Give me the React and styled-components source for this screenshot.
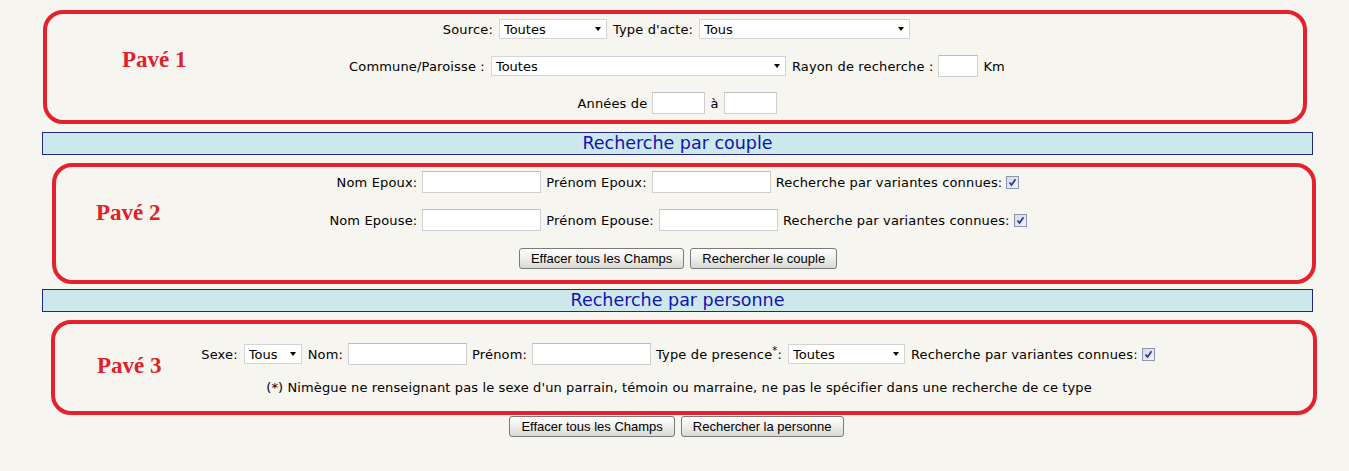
import styled, { createGlobalStyle } from 'styled-components';

const GlobalStyle = createGlobalStyle`
    html, body {
        margin: 0;
        padding: 0;
        background: #f6f5ef;
    }
    body {
        font-family: 'DejaVu Sans', Verdana, sans-serif;
        font-size: 13px;
        color: #000;
    }
`;

function SelectField({ width, value }) {
    return (
        <SelectWrap $width={width}>
            <Select defaultValue={value}>
                <option>{value}</option>
            </Select>
        </SelectWrap>
    );
}

function CheckMark() {
    return (
        <CheckBox>
            <svg width='9' height='9' viewBox='0 0 9 9'>
                <path d='M1.5 4.5 L3.5 7 L7.5 1.2' fill='none' stroke='#2a3f8f' strokeWidth='1.8' />
            </svg>
        </CheckBox>
    );
}

function App() {
    return (
        <>
            <GlobalStyle />
            <Page>
                <Block $left={43} $right={42} $height={114} $top={10}>
                    <PaveLabel $x={75} $y={46}>Pavé 1</PaveLabel>
                    <Rows $padTop={4} $gap={15} $shift={0}>
                        <Row>
                            <Label>Source:</Label>
                            <SelectField width={108} value='Toutes' />
                            <Label>Type d'acte:</Label>
                            <SelectField width={211} value='Tous' />
                        </Row>
                        <Row>
                            <Label>Commune/Paroisse :</Label>
                            <SelectField width={295} value='Toutes' />
                            <Label>Rayon de recherche :</Label>
                            <TextInput $width={40} />
                            <Label>Km</Label>
                        </Row>
                        <Row>
                            <Label>Années de</Label>
                            <TextInput $width={53} />
                            <Label>à</Label>
                            <TextInput $width={53} />
                        </Row>
                    </Rows>
                </Block>

                <SectionBar $top={8}>Recherche par couple</SectionBar>

                <Block $left={52} $right={33} $height={121} $top={8}>
                    <PaveLabel $x={40} $y={46}>Pavé 2</PaveLabel>
                    <Rows $padTop={4} $gap={16} $shift={16}>
                        <Row>
                            <Label>Nom Epoux:</Label>
                            <TextInput $width={119} />
                            <Label>Prénom Epoux:</Label>
                            <TextInput $width={119} />
                            <Label>Recherche par variantes connues:</Label>
                            <CheckMark />
                        </Row>
                        <Row>
                            <Label>Nom Epouse:</Label>
                            <TextInput $width={119} />
                            <Label>Prénom Epouse:</Label>
                            <TextInput $width={119} />
                            <Label>Recherche par variantes connues:</Label>
                            <CheckMark />
                        </Row>
                        <Row $gap={6}>
                            <Button type='button'>Effacer tous les Champs</Button>
                            <Button type='button'>Rechercher le couple</Button>
                        </Row>
                    </Rows>
                </Block>

                <SectionBar $top={5}>Recherche par personne</SectionBar>

                <Block $left={51} $right={32} $height={95} $top={8}>
                    <PaveLabel $x={42} $y={42}>Pavé 3</PaveLabel>
                    <Rows $padTop={19} $gap={15} $shift={16}>
                        <Row>
                            <Label>Sexe:</Label>
                            <SelectField width={58} value='Tous' />
                            <Label>Nom:</Label>
                            <TextInput $width={119} />
                            <Label>Prénom:</Label>
                            <TextInput $width={119} />
                            <Label>
                                Type de presence<Sup>*</Sup>:
                            </Label>
                            <SelectField width={117} value='Toutes' />
                            <Label>Recherche par variantes connues:</Label>
                            <CheckMark />
                        </Row>
                        <Note>
                            (*) Nimègue ne renseignant pas le sexe d'un parrain, témoin ou marraine, ne pas le
                            spécifier dans une recherche de ce type
                        </Note>
                    </Rows>
                </Block>

                <Row $gap={6}>
                    <Button type='button'>Effacer tous les Champs</Button>
                    <Button type='button'>Rechercher la personne</Button>
                </Row>
            </Page>
        </>
    );
}

const Page = styled.div`
    width: 1349px;
    display: flex;
    flex-direction: column;
`;

const Block = styled.section`
    position: relative;
    box-sizing: border-box;
    margin-top: ${(p) => p.$top}px;
    margin-left: ${(p) => p.$left}px;
    margin-right: ${(p) => p.$right}px;
    height: ${(p) => p.$height}px;
    border: 4px solid #e5212b;
    border-radius: 20px;
`;

const PaveLabel = styled.span`
    position: absolute;
    left: ${(p) => p.$x}px;
    top: ${(p) => p.$y}px;
    transform: translateY(-50%);
    font-family: 'Liberation Serif', 'Times New Roman', serif;
    font-weight: bold;
    font-size: 23px;
    color: #e0202a;
`;

const Rows = styled.div`
    display: flex;
    flex-direction: column;
    align-items: center;
    gap: ${(p) => p.$gap}px;
    padding-top: ${(p) => p.$padTop}px;
    padding-right: ${(p) => p.$shift}px;
`;

const Row = styled.div`
    display: flex;
    align-items: center;
    justify-content: center;
    gap: ${(p) => p.$gap || 5}px;
    height: 22px;
    padding-left: 4px;
`;

const Label = styled.span`
    white-space: nowrap;
    letter-spacing: 0.15px;
`;

const Sup = styled.sup`
    font-size: 10px;
    line-height: 0;
`;

const TextInput = styled.input.attrs({ type: 'text' })`
    box-sizing: border-box;
    width: ${(p) => p.$width}px;
    height: 22px;
    margin: 0;
    padding: 1px 3px;
    border: 1px solid #cfcfcf;
    border-top-color: #bdbdbd;
    background: #fff;
    font: inherit;
`;

const SelectWrap = styled.span`
    position: relative;
    display: inline-flex;
    width: ${(p) => p.$width}px;
    height: 20px;
    margin: 0 1px;

    &::after {
        content: '';
        position: absolute;
        right: 6px;
        top: 8px;
        border-left: 3.5px solid transparent;
        border-right: 3.5px solid transparent;
        border-top: 4px solid #000;
        pointer-events: none;
    }
`;

const Select = styled.select`
    appearance: none;
    box-sizing: border-box;
    width: 100%;
    height: 100%;
    margin: 0;
    padding: 0 16px 0 4px;
    border: 1px solid #d4d4d4;
    border-radius: 0;
    background: #fff;
    font: inherit;
    color: #000;
    outline: none;
`;

const CheckBox = styled.span`
    box-sizing: border-box;
    display: inline-flex;
    align-items: center;
    justify-content: center;
    width: 13px;
    height: 13px;
    margin-left: -1px;
    border: 1px solid #8a96b0;
    background: linear-gradient(135deg, #d8d8e0, #f4f4f6);
`;

const SectionBar = styled.div`
    box-sizing: border-box;
    margin-top: ${(p) => p.$top}px;
    margin-left: 42px;
    margin-right: 36px;
    height: 23px;
    border: 1px solid #1f2a80;
    background: #cce8ec;
    color: #1212b0;
    font-size: 17.5px;
    line-height: 21px;
    text-align: center;
`;

const Note = styled.p`
    margin: 0;
    line-height: 16px;
    font-size: 13px;
    letter-spacing: 0.12px;
    white-space: nowrap;
    padding-left: 6px;
`;

const Button = styled.button`
    box-sizing: border-box;
    height: 21px;
    margin: 0;
    padding: 0 11px;
    border: 1px solid #7a7a7a;
    border-radius: 3px;
    background: linear-gradient(#ffffff, #f0f0ee 45%, #d8d8d4);
    font-family: 'Liberation Sans', Arial, sans-serif;
    font-size: 13px;
    color: #000;
    white-space: nowrap;
`;

export default App;
